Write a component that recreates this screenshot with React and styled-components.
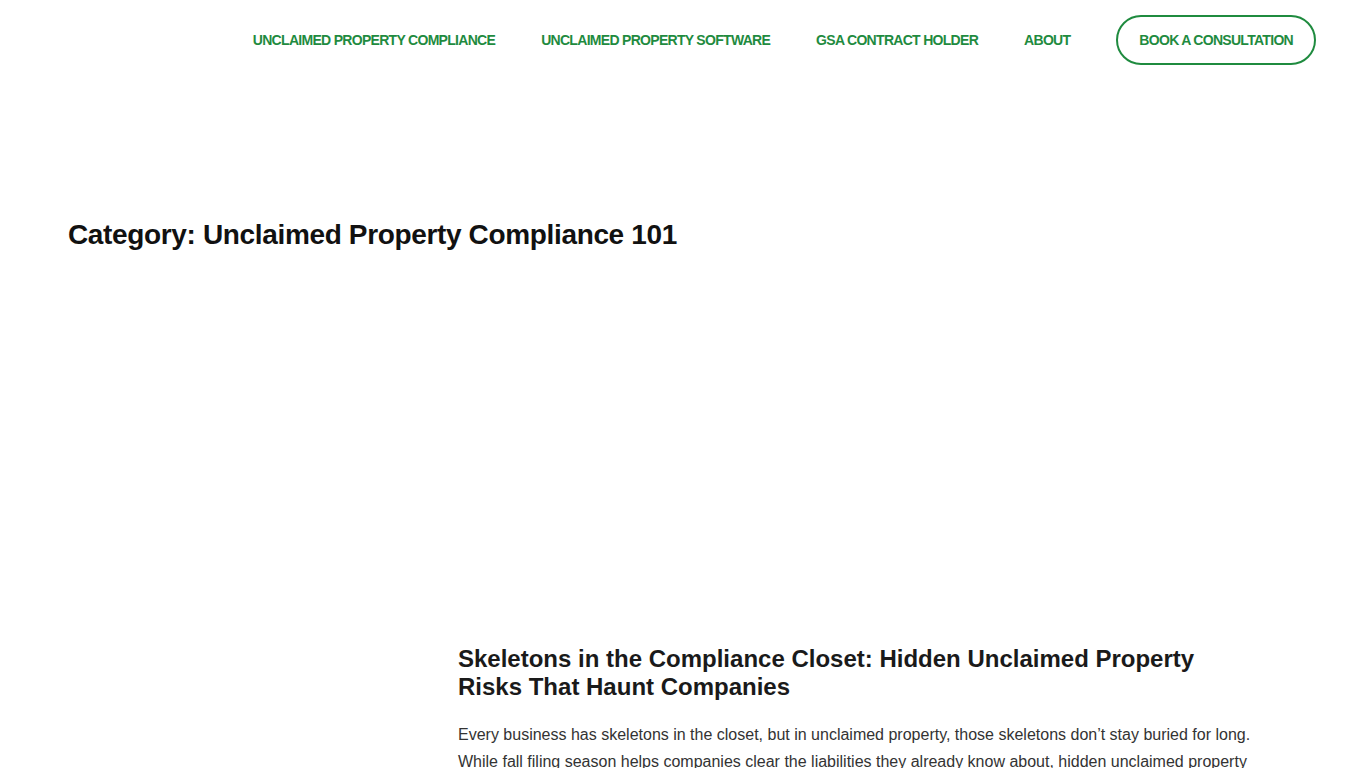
import React from 'react';
import styled, { createGlobalStyle } from 'styled-components';

const GREEN = '#1f8b3f';

const GlobalStyle = createGlobalStyle`
  html, body {
    margin: 0;
    padding: 0;
    background: #ffffff;
    font-family: "Liberation Sans", Arial, sans-serif;
    color: #1a1a1a;
  }
`;

const Page = styled.div`
  width: 100%;
  min-height: 100vh;
  overflow: hidden;
`;

const Header = styled.header`
  display: flex;
  justify-content: flex-end;
  align-items: center;
  height: 79px;
  padding: 0 50px 0 68px;
`;

const Nav = styled.nav`
  display: flex;
  align-items: center;
  gap: 46px;
`;

const NavLink = styled.a`
  color: ${GREEN};
  font-size: 14px;
  font-weight: 700;
  letter-spacing: -0.7px;
  text-transform: uppercase;
  text-decoration: none;
  white-space: nowrap;
`;

const CtaButton = styled.a`
  display: inline-flex;
  align-items: center;
  justify-content: center;
  height: 50px;
  padding: 0 21px;
  box-sizing: border-box;
  border: 2px solid ${GREEN};
  border-radius: 25px;
  color: ${GREEN};
  font-size: 14px;
  font-weight: 700;
  letter-spacing: -0.7px;
  text-transform: uppercase;
  text-decoration: none;
  white-space: nowrap;
`;

const Main = styled.main`
  padding: 0 68px;
`;

const ArchiveTitle = styled.h1`
  margin: 139px 0 0;
  font-size: 28px;
  line-height: 34px;
  font-weight: 700;
  letter-spacing: -0.35px;
  color: #111;
`;

const PostRow = styled.article`
  display: grid;
  grid-template-columns: 362px 800px;
  column-gap: 28px;
  margin-top: 393px;
`;

const Thumb = styled.div`
  min-height: 140px;
`;

const PostBody = styled.div`
  display: flex;
  flex-direction: column;
`;

const PostTitle = styled.h2`
  margin: 0;
  max-width: 760px;
  font-size: 24px;
  line-height: 28px;
  font-weight: 700;
  color: #1a1a1a;
`;

const Excerpt = styled.p`
  margin: 20px 0 0;
  font-size: 16px;
  line-height: 27px;
  color: #333;
`;

const links = [
  'Unclaimed Property Compliance',
  'Unclaimed Property Software',
  'GSA Contract Holder',
  'About',
];

export default function App() {
  return (
    <Page>
      <GlobalStyle />
      <Header>
        <Nav>
          {links.map((l) => (
            <NavLink key={l} href="#">{l}</NavLink>
          ))}
          <CtaButton href="#">Book a Consultation</CtaButton>
        </Nav>
      </Header>
      <Main>
        <ArchiveTitle>Category: Unclaimed Property Compliance 101</ArchiveTitle>
        <PostRow>
          <Thumb />
          <PostBody>
            <PostTitle>
              Skeletons in the Compliance Closet: Hidden Unclaimed Property Risks That Haunt Companies
            </PostTitle>
            <Excerpt>
              Every business has skeletons in the closet, but in unclaimed property, those skeletons don’t stay buried for long.
              While fall filing season helps companies clear the liabilities they already know about, hidden unclaimed property
              risks can surface long after the filing is done.
            </Excerpt>
          </PostBody>
        </PostRow>
      </Main>
    </Page>
  );
}
